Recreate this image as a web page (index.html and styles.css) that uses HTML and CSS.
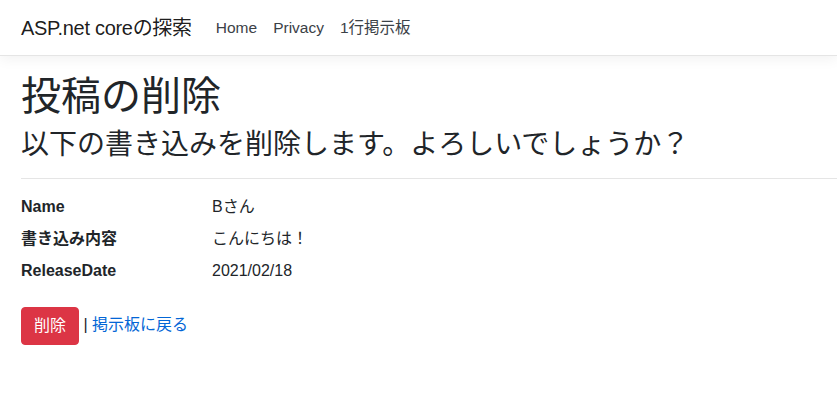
FILE: index.html
```html
<!DOCTYPE html>
<html lang="ja">
<head>
<meta charset="utf-8">
<title>投稿の削除 - ASP.net coreの探索</title>
<link rel="stylesheet" href="styles.css">
</head>
<body>
<header class="navbar">
  <a class="brand" href="#">ASP.net coreの探索</a>
  <nav class="nav">
    <a class="nav-link" href="#">Home</a>
    <a class="nav-link" href="#">Privacy</a>
    <a class="nav-link" href="#">1行掲示板</a>
  </nav>
</header>
<main class="main">
  <h1 class="title">投稿の削除</h1>
  <h3 class="subtitle">以下の書き込みを削除します。よろしいでしょうか？</h3>
  <div>
    <hr class="rule">
    <dl class="details">
      <dt>Name</dt>
      <dd>Bさん</dd>
      <dt>書き込み内容</dt>
      <dd>こんにちは！</dd>
      <dt>ReleaseDate</dt>
      <dd>2021/02/18</dd>
    </dl>
    <form class="actions">
      <button type="button" class="btn-danger">削除</button> | <a class="back" href="#">掲示板に戻る</a>
    </form>
  </div>
</main>
</body>
</html>
```
FILE: styles.css
```css
html, body {
  margin: 0;
  padding: 0;
}
body {
  font-family: "Liberation Sans", "Noto Sans CJK JP", sans-serif;
  font-size: 16px;
  line-height: 1.5;
  color: #212529;
  background: #fff;
  overflow-x: hidden;
}
a {
  text-decoration: none;
}
.navbar {
  display: flex;
  align-items: center;
  height: 55px;
  padding-left: 21px;
  background: #fff;
  border-bottom: 1px solid #e5e5e5;
  box-shadow: 0 4px 12px rgba(0, 0, 0, 0.05);
  margin-bottom: 16px;
}
.brand {
  font-size: 20px;
  line-height: 30px;
  letter-spacing: -0.3px;
  color: rgba(0, 0, 0, 0.9);
  margin-right: 16px;
}
.nav {
  display: flex;
}
.nav-link {
  padding: 8px;
  color: #3b4147;
  font-size: 15.5px;
  line-height: 24px;
}
.main {
  padding-left: 21px;
}
.title {
  font-size: 40px;
  font-weight: 400;
  line-height: 1.2;
  margin: 0 0 8px;
}
.subtitle {
  font-size: 28px;
  font-weight: 400;
  line-height: 1.2;
  margin: 0 0 8px;
}
.rule {
  border: 0;
  border-top: 1px solid rgba(0, 0, 0, 0.1);
  margin: 16px 0;
}
.details {
  display: grid;
  grid-template-columns: 191px 1fr;
  margin: 0 0 16px;
}
.details dt {
  font-weight: 700;
  margin: 0;
}
.details dd {
  margin: 0 0 8px;
}
.actions {
  margin: 0;
}
.btn-danger {
  font-family: inherit;
  font-size: 16px;
  line-height: 1.5;
  padding: 6px 12px;
  border: 1px solid #dc3545;
  border-radius: 4px;
  background: #dc3545;
  color: #fff;
  vertical-align: middle;
}
.back {
  color: #0366d6;
}
```
